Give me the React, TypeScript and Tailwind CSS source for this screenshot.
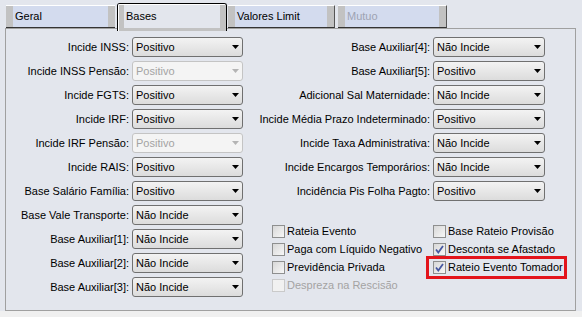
import React from 'react';

const leftRows: { label: string; value: string; disabled?: boolean }[] = [
  { label: 'Incide INSS:', value: 'Positivo' },
  { label: 'Incide INSS Pensão:', value: 'Positivo', disabled: true },
  { label: 'Incide FGTS:', value: 'Positivo' },
  { label: 'Incide IRF:', value: 'Positivo' },
  { label: 'Incide IRF Pensão:', value: 'Positivo', disabled: true },
  { label: 'Incide RAIS:', value: 'Positivo' },
  { label: 'Base Salário Família:', value: 'Positivo' },
  { label: 'Base Vale Transporte:', value: 'Não Incide' },
  { label: 'Base Auxiliar[1]:', value: 'Não Incide' },
  { label: 'Base Auxiliar[2]:', value: 'Não Incide' },
  { label: 'Base Auxiliar[3]:', value: 'Não Incide' },
];

const rightRows = [
  { label: 'Base Auxiliar[4]:', value: 'Não Incide' },
  { label: 'Base Auxiliar[5]:', value: 'Positivo' },
  { label: 'Adicional Sal Maternidade:', value: 'Não Incide' },
  { label: 'Incide Média Prazo Indeterminado:', value: 'Positivo' },
  { label: 'Incide Taxa Administrativa:', value: 'Não Incide' },
  { label: 'Incide Encargos Temporários:', value: 'Não Incide' },
  { label: 'Incidência Pis Folha Pagto:', value: 'Positivo' },
];

function Combo({ value, disabled, wide }: { value: string; disabled?: boolean; wide?: boolean }) {
  return (
    <div
      className={`flex h-[20px] items-center rounded-[3px] border pl-[3px] ${wide ? 'w-[112px]' : 'w-[111px]'} ${
        disabled
          ? 'border-[#c4c4c4] bg-[#f4f4f4] text-[#a3a3a3]'
          : 'border-[#707070] bg-linear-to-b from-[#f3f3f3] to-[#dcdcdc] text-black'
      }`}
    >
      <span className="flex-1 leading-none">{value}</span>
      <svg width="7" height="4" className="mr-[3px]">
        <path d="M0 0H7L3.5 4Z" fill={disabled ? '#b4b4b4' : '#000'} />
      </svg>
    </div>
  );
}

function Check({ label, checked, disabled }: { label: string; checked?: boolean; disabled?: boolean }) {
  return (
    <div className="flex h-[18px] items-center gap-[2px]">
      <div
        className={`flex h-[13px] w-[13px] items-center justify-center border ${
          disabled ? 'border-[#cacaca] bg-[#f1f1f1]' : 'border-[#8e8f8f] bg-linear-to-br from-[#d8d8d8] to-[#f7f7f7]'
        }`}
      >
        {checked && (
          <svg width="11" height="11" viewBox="0 0 11 11">
            <path d="M2 5.5L4.3 8.5L9 2" fill="none" stroke="#4657a0" strokeWidth="1.8" />
          </svg>
        )}
      </div>
      <span className={disabled ? 'text-[#a3a3a3]' : 'text-black'}>{label}</span>
    </div>
  );
}

function Tab({ label, muted, edge }: { label: string; muted?: boolean; edge?: boolean }) {
  return (
    <div
      className={`flex h-[23px] border-t border-b border-t-white border-b-[#333333] bg-[#d3dbee] ${
        edge ? 'border-r border-r-[#555555]' : ''
      }`}
    >
      <div className="w-[7px] bg-[#c2c2c2]" />
      <div className={`flex flex-1 items-center pl-[2px] ${muted ? 'text-[#9ea3b3]' : 'text-black'}`}>{label}</div>
      <div className="w-[7px] bg-[#c2c2c2]" />
    </div>
  );
}

export default function App() {
  return (
    <div className="flex h-[317px] w-[582px] flex-col bg-[#e3e6ed] text-[11px] text-black [font-family:'Liberation_Sans',Arial,sans-serif]">
      {/* tabs */}
      <div className="relative z-10 flex h-[28px] items-end pl-[6px]">
        <div className="w-[109px]">
          <Tab label="Geral" />
        </div>
        <div className="-mb-[3px] ml-[2px] h-[28px] w-[110px] rounded-t-[3px] border border-b-0 border-black bg-[#e3e6ed]">
          <div className="flex h-full rounded-t-[2px] border-t border-l border-white">
            <div className="w-[5px] bg-[#c2c2c2]" />
            <div className="flex flex-1 flex-col">
              <div className="flex flex-1 items-center pl-[2px]">Bases</div>
              <div className="h-[3px] bg-[#c2c2c2]" />
            </div>
            <div className="w-[6px] bg-[#c2c2c2]" />
          </div>
        </div>
        <div className="ml-[1px] w-[107px]">
          <Tab label="Valores Limit" edge />
        </div>
        <div className="ml-[3px] w-[109px]">
          <Tab label="Mutuo" muted edge />
        </div>
      </div>

      {/* panel */}
      <div className="ml-[5px] flex h-[283px] w-[571px] border border-[#a0a0a0] pt-[8px]">
        <div className="flex w-[238px] flex-col gap-[4px]">
          {leftRows.map((r) => (
            <div key={r.label} className="flex items-center gap-[3px]">
              <div className="w-[123px] text-right">{r.label}</div>
              <Combo value={r.value} disabled={r.disabled} />
            </div>
          ))}
        </div>

        <div className="flex flex-1 flex-col">
          <div className="flex flex-col gap-[4px]">
            {rightRows.map((r) => (
              <div key={r.label} className="flex items-center gap-[3px]">
                <div className="w-[186px] text-right">{r.label}</div>
                <Combo value={r.value} wide />
              </div>
            ))}
          </div>

          <div className="ml-[28px] mt-[21px] flex">
            <div className="flex w-[161px] flex-col">
              <Check label="Rateia Evento" />
              <Check label="Paga com Líquido Negativo" />
              <Check label="Previdência Privada" />
              <Check label="Despreza na Rescisão" disabled />
            </div>
            <div className="flex flex-col">
              <Check label="Base Rateio Provisão" />
              <Check label="Desconta se Afastado" checked />
              <div className="relative">
                <Check label="Rateio Evento Tomador" checked />
                <div className="pointer-events-none absolute -left-[7px] -top-[2px] h-[23px] w-[141px] border-[3px] border-[#e3141b]" />
              </div>
            </div>
          </div>
        </div>
      </div>

      <div className="flex-1 bg-[#f0f0f0]" />
    </div>
  );
}
